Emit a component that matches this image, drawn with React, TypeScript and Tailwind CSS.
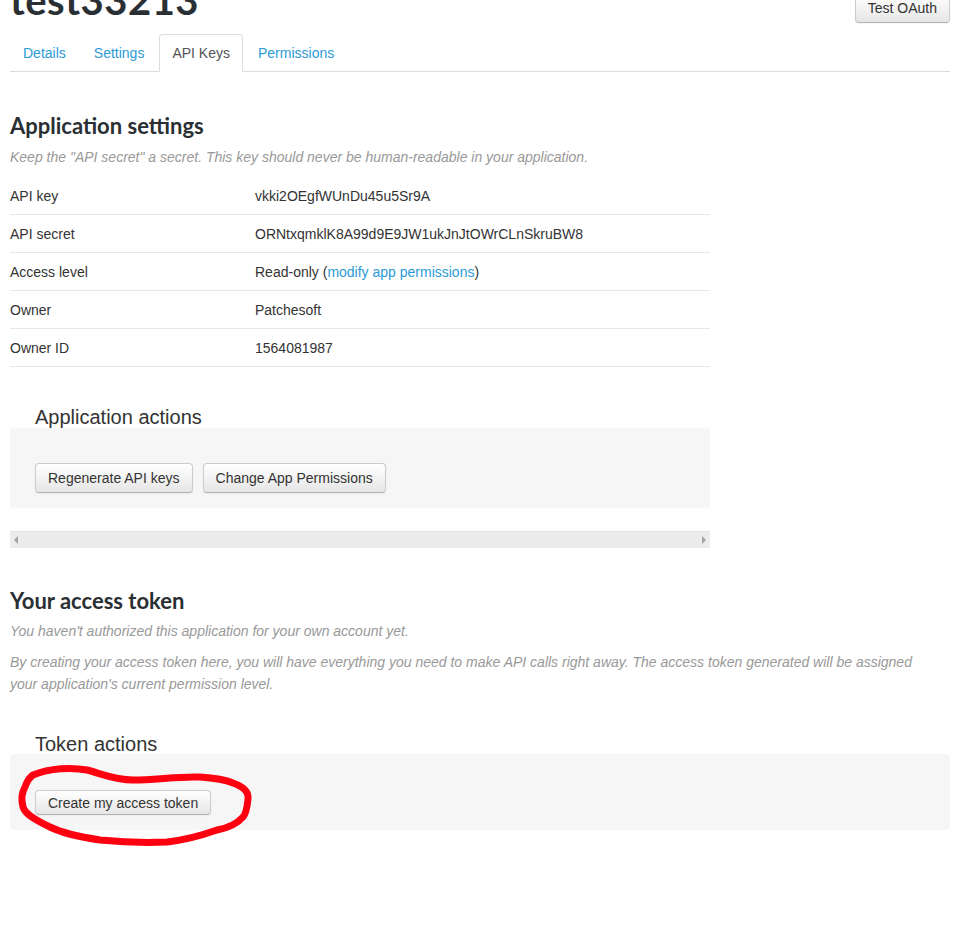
import React from "react";

const rows: { label: string; value: React.ReactNode }[] = [
  { label: "API key", value: "vkki2OEgfWUnDu45u5Sr9A" },
  { label: "API secret", value: "ORNtxqmklK8A99d9E9JW1ukJnJtOWrCLnSkruBW8" },
  {
    label: "Access level",
    value: (
      <>
        Read-only (<a className="text-[#2b9bd6]">modify app permissions</a>)
      </>
    ),
  },
  { label: "Owner", value: "Patchesoft" },
  { label: "Owner ID", value: "1564081987" },
];

const tabs = ["Details", "Settings", "API Keys", "Permissions"];

const Btn: React.FC<{ label: string; small?: boolean }> = ({ label, small }) => (
  <button
    className={`${small ? "h-[25px]" : "h-[30px]"} px-3 text-[14px] text-[#333] rounded-[4px] border border-[#ccc] border-b-[#b3b3b3] bg-gradient-to-b from-white to-[#e6e6e6] shadow-[inset_0_1px_0_rgba(255,255,255,0.2),0_1px_2px_rgba(0,0,0,0.05)] leading-5`}
  >
    {label}
  </button>
);

const Scrollbar: React.FC = () => (
  <div className="mt-[23px] h-[17px] w-[700px] bg-[#ececec] border-t border-[#e2e2e2] flex items-center justify-between px-[4px]">
    <svg width="5" height="8" viewBox="0 0 5 8">
      <polygon points="4,0 4,8 0,4" fill="#a3a3a3" />
    </svg>
    <svg width="5" height="8" viewBox="0 0 5 8">
      <polygon points="1,0 1,8 5,4" fill="#a3a3a3" />
    </svg>
  </div>
);

const App: React.FC = () => {
  return (
    <div className="w-[940px] ml-[10px] text-[14px] text-[#333] font-['Liberation_Sans',Arial,sans-serif] pb-[100px]">
      {/* Header */}
      <div className="flex justify-between items-start -mt-[22px] h-[56px]">
        <h1 className="text-[40px] leading-[44px] font-bold text-[#292f33] font-['Lato',sans-serif] tracking-[0.5px]">
          test33213
        </h1>
        <div className="mt-[15px]">
          <Btn label="Test OAuth" />
        </div>
      </div>

      {/* Tabs */}
      <ul className="flex border-b border-[#ddd] h-[38px]">
        {tabs.map(t => (
          <li
            key={t}
            className={`mr-[2px] px-3 py-2 leading-5 rounded-t-[4px] border ${
              t === "API Keys"
                ? "border-[#ddd] border-b-white bg-white text-[#555] h-[38px]"
                : "border-transparent text-[#2b9bd6]"
            }`}
          >
            {t}
          </li>
        ))}
      </ul>

      {/* Application settings */}
      <h2 className="mt-[39px] text-[22px] leading-[30px] font-bold text-[#292f33] font-['Lato',sans-serif]">
        Application settings
      </h2>
      <p className="mt-[6px] italic text-[#999] leading-5">
        Keep the "API secret" a secret. This key should never be human-readable in your application.
      </p>
      <div className="mt-[10px] w-[700px]">
        {rows.map(r => (
          <div key={r.label} className="flex items-center h-[38px] border-b border-[#e8e8e8] pt-px">
            <div className="w-[245px]">{r.label}</div>
            <div>{r.value}</div>
          </div>
        ))}
      </div>

      <h3 className="mt-[40px] ml-[25px] text-[20px] leading-5 text-[#333]">Application actions</h3>
      <div className="w-[700px] bg-[#f6f6f6] rounded-[4px] pt-[35px] pb-[15px] pl-[25px] flex gap-[10px] mt-px">
        <Btn label="Regenerate API keys" />
        <Btn label="Change App Permissions" />
      </div>

      <Scrollbar />

      {/* Access token */}
      <h2 className="mt-[38px] text-[22px] leading-[30px] font-bold text-[#292f33] font-['Lato',sans-serif]">
        Your access token
      </h2>
      <p className="mt-[5px] italic text-[#999] leading-5">
        You haven't authorized this application for your own account yet.
      </p>
      <p className="mt-[10px] w-[925px] italic text-[#999] leading-[22px]">
        By creating your access token here, you will have everything you need to make API calls right away. The access
        token generated will be assigned your application's current permission level.
      </p>

      <h3 className="mt-[39px] ml-[25px] text-[20px] leading-5 text-[#333]">Token actions</h3>
      <div className="relative bg-[#f6f6f6] rounded-[4px] pt-[36px] pb-[15px] pl-[25px]">
        <Btn label="Create my access token" small />
        {/* red hand-drawn circle */}
        <svg
          className="absolute left-0 top-0 pointer-events-none"
          width="260"
          height="100"
          viewBox="0 0 260 100"
        >
          <path
            d="M23 21 C40 14 62 13 77 16 C92 20 105 26 123 26 C145 26 170 22 190 23 C205 24 216 26 223 29 C234 33 239 38 238 45 C237 55 236 60 233 63 C226 71 218 74 207 76 C190 82 175 86 157 88 C135 89 110 88 90 86 C70 83 52 79 40 73 C25 66 15 60 13 53 C11 45 12 38 15 33 C17 27 20 23 23 21"
            fill="none"
            stroke="#ff0010"
            strokeWidth="7"
            strokeLinecap="round"
            strokeLinejoin="round"
          />
        </svg>
      </div>
    </div>
  );
};

export default App;
